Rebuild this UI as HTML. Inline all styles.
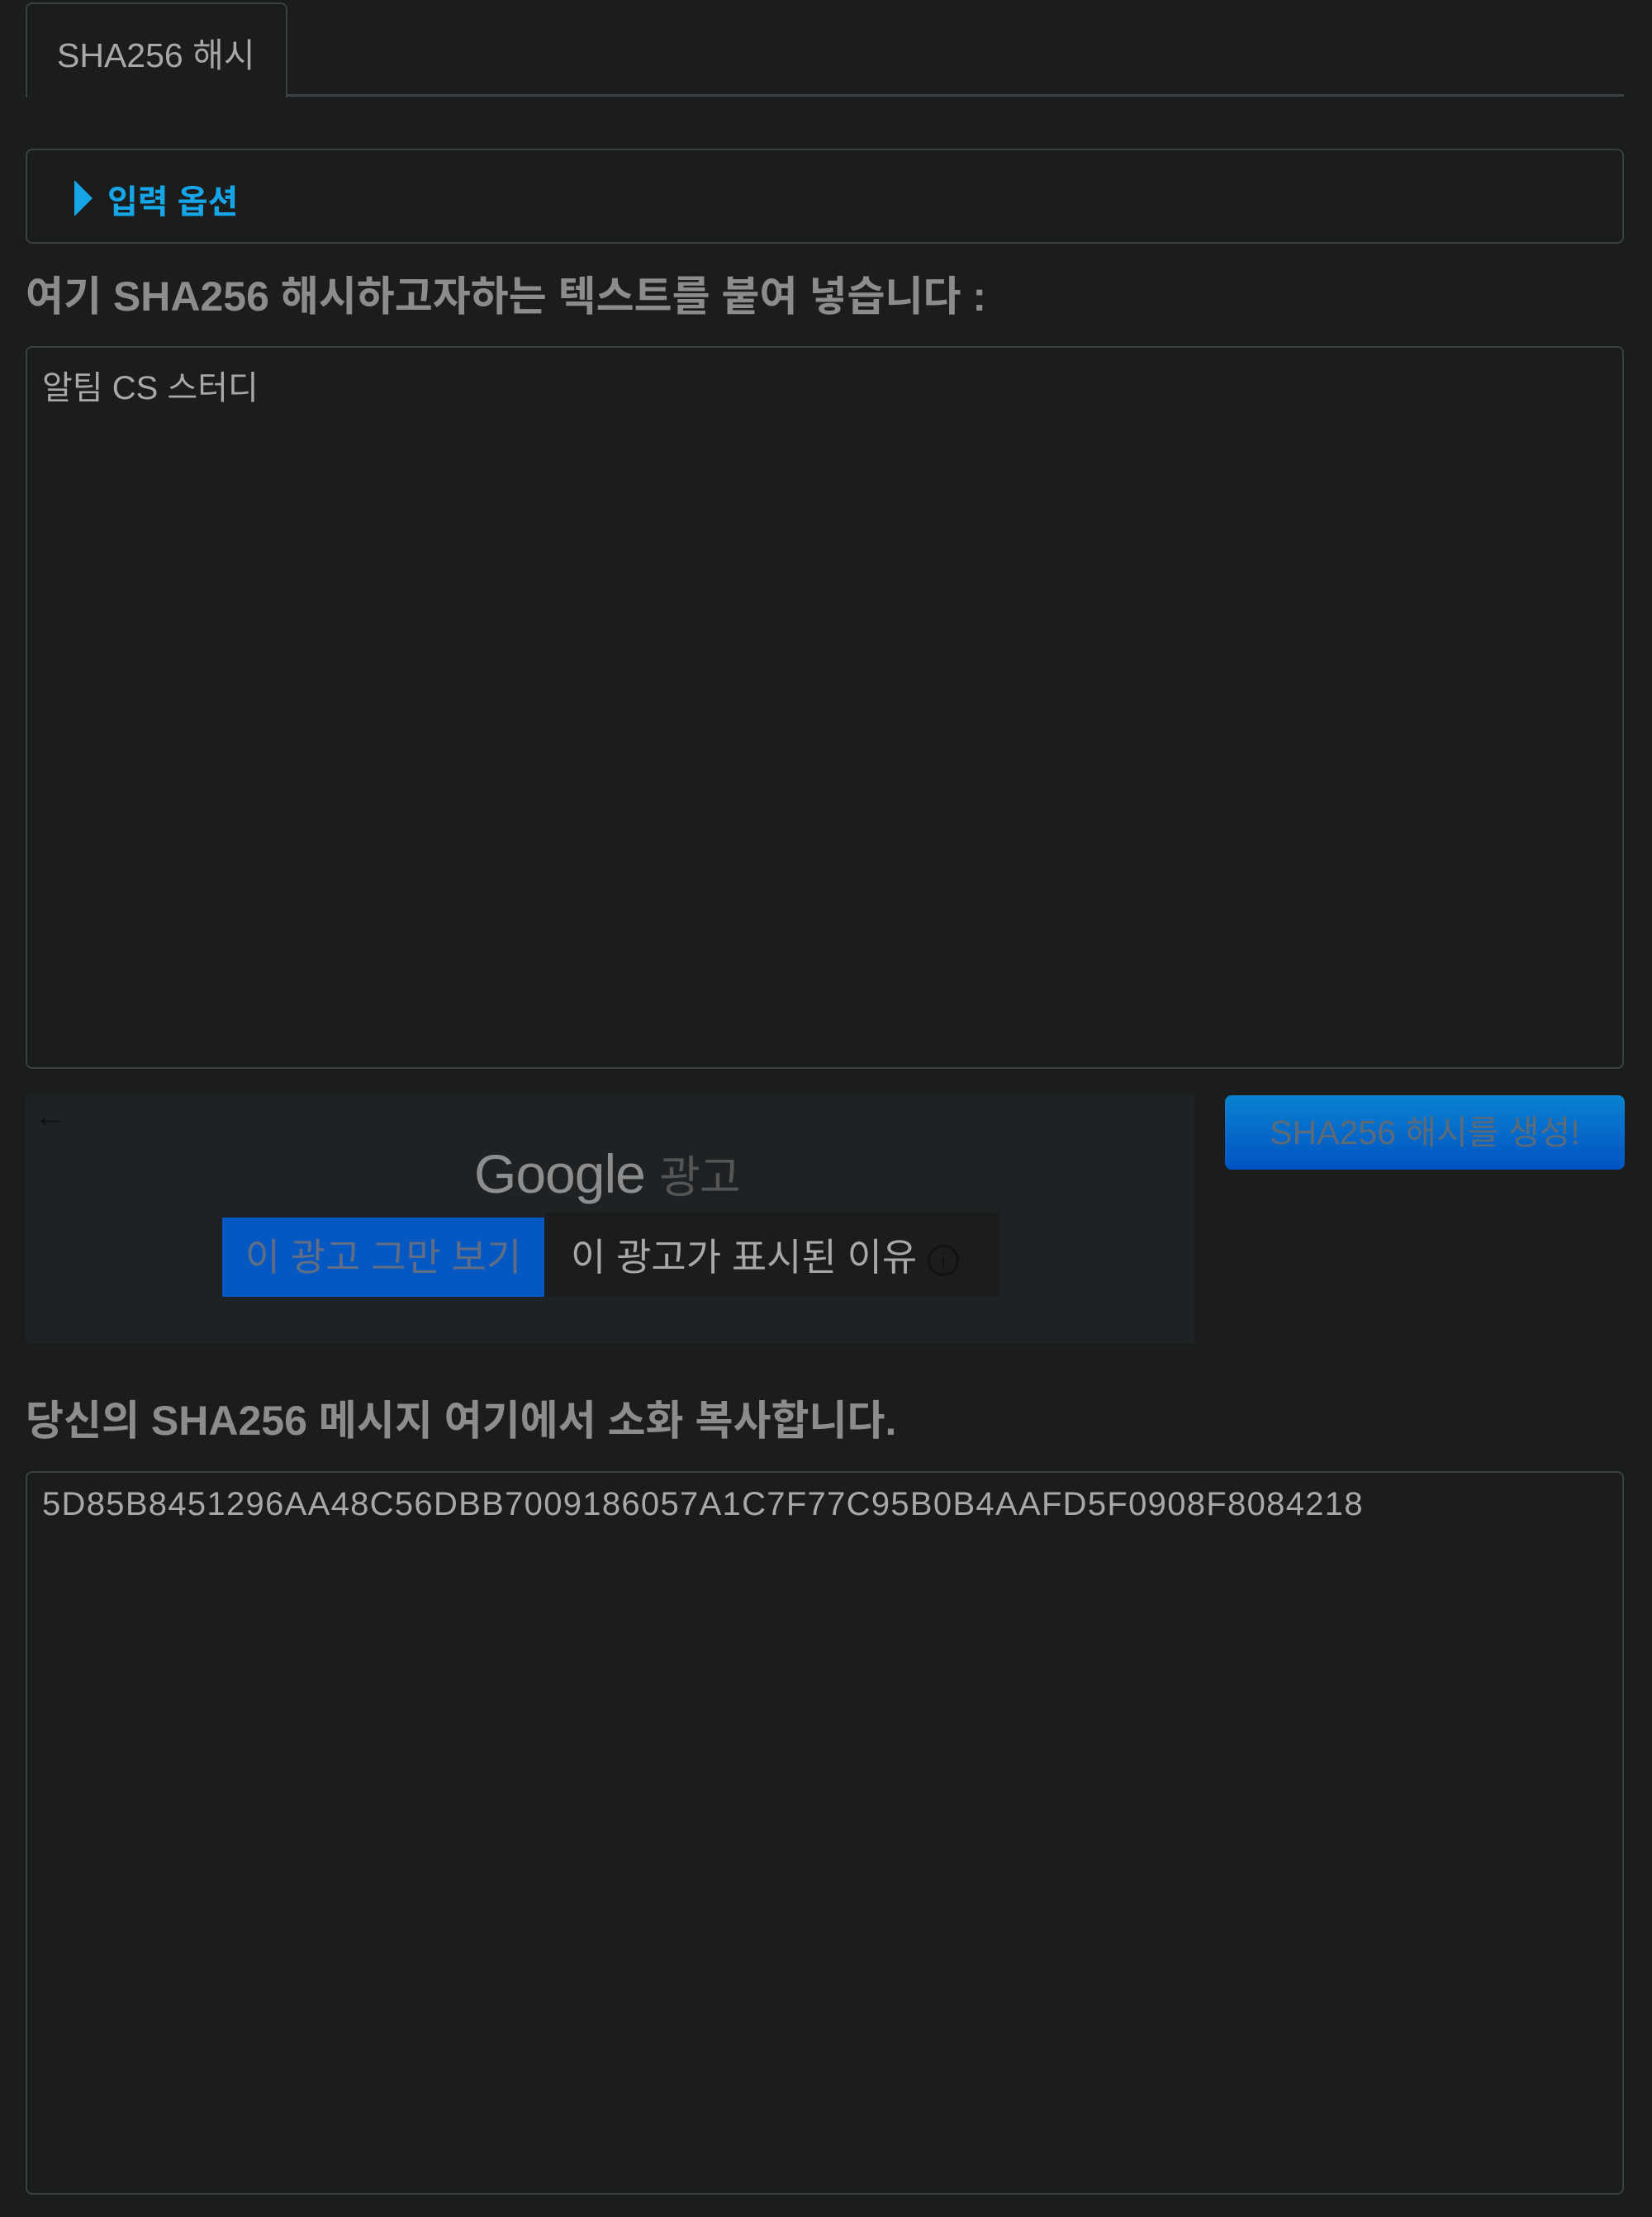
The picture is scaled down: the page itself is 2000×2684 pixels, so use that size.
<!DOCTYPE html>
<html><head><meta charset="utf-8"><style>
*{box-sizing:border-box;margin:0;padding:0}
body{width:2000px;height:2684px;background:#1b1c1c;font-family:"Liberation Sans","Noto Sans CJK KR",sans-serif;position:relative;overflow:hidden;color:#a3a3a3}
.a{position:absolute}
.tab{left:31px;top:3px;width:317px;height:115px;border:2px solid #3b4044;border-bottom:none;border-radius:8px 8px 0 0;background:#1b1c1c;font-size:41px;color:#a8a8a8;padding:28px 0 0 36px}
.line{left:346px;top:114px;width:1620px;height:3px;background:#3b4044}
.box{left:31px;top:180px;width:1935px;height:115px;border:2px solid #3b4044;border-radius:8px}
.opt{left:130px;top:212px;font-size:40px;font-weight:bold;color:#16a5e6}
.tri{left:90px;top:218px;width:0;height:0;border-top:22px solid transparent;border-bottom:22px solid transparent;border-left:22px solid #16a5e6}
h2{position:absolute;font-size:50px;font-weight:bold;color:#8c8c8c;left:31px}
.ta{border:2px solid #3b4044;border-radius:8px;left:31px;width:1935px;font-size:40px;color:#a8a8a8;padding:16px 18px}
.ad{left:31px;top:1325px;width:1416px;height:301px;background:#1f2224}
.btn{left:1483px;top:1326px;width:484px;height:90px;border-radius:8px;background:linear-gradient(#0a82d0,#0053c2);color:#5d6a78;font-size:41px;text-align:center;line-height:90px}
</style></head><body>
<div class="a line"></div>
<div class="a tab">SHA256 해시</div>
<div class="a box"></div>
<div class="a tri"></div>
<div class="a opt">입력 옵션</div>
<h2 style="top:319px">여기 SHA256 해시하고자하는 텍스트를 붙여 넣습니다 :</h2>
<div class="a ta" style="top:419px;height:875px">알팀 CS 스터디</div>
<div class="a ad">
 <div class="a" style="left:10px;top:4px;font-size:40px;color:#111">←</div>
 <div class="a" style="left:543px;top:56px;font-size:66px;color:#8d8d8d;letter-spacing:-1px">Google <span style="font-size:54px;color:#555">광고</span></div>
 <div class="a" style="left:238px;top:149px;width:390px;height:96px;background:#0557c2;color:#5f6e84;font-size:46px;line-height:96px;text-align:center">이 광고 그만 보기</div>
 <div class="a" style="left:628px;top:143px;width:551px;height:102px;background:#1b1c1c;color:#a8a8a8;font-size:46px;line-height:108px;padding-left:32px;white-space:nowrap">이 광고가 표시된 이유 <span style="display:inline-block;width:38px;height:38px;border:3px solid #111;border-radius:50%;vertical-align:middle;font-size:26px;line-height:32px;text-align:center;color:#111">i</span></div>
</div>
<div class="a btn">SHA256 해시를 생성!</div>
<h2 style="top:1680px">당신의 SHA256 메시지 여기에서 소화 복사합니다.</h2>
<div class="a ta" style="top:1781px;height:876px;font-size:40px;letter-spacing:1.3px">5D85B8451296AA48C56DBB7009186057A1C7F77C95B0B4AAFD5F0908F8084218</div>
</body></html>
